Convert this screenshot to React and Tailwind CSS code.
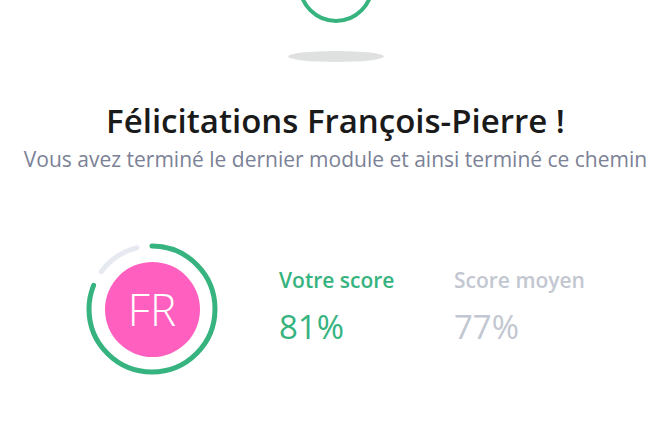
const R = 63;
const C = 2 * Math.PI * R;

function ScoreRing({ score }) {
  const green = (score / 100) * C;
  const gap = 0.04 * C;
  const gray = C - green - gap * 2;
  return (
    <div className="relative w-[136px] h-[136px] flex items-center justify-center">
      <svg className="absolute inset-0" width="136" height="136" viewBox="0 0 136 136">
        <g transform="rotate(-90 68 68)">
          <circle
            cx="68"
            cy="68"
            r={R}
            fill="none"
            stroke="#e6e9f0"
            strokeWidth="5"
            strokeLinecap="round"
            strokeDasharray={`${gray} ${C}`}
            strokeDashoffset={-(green + gap)}
          />
          <circle
            cx="68"
            cy="68"
            r={R}
            fill="none"
            stroke="#36b37e"
            strokeWidth="5"
            strokeLinecap="round"
            strokeDasharray={`${green} ${C}`}
          />
        </g>
      </svg>
      <div className="w-[95px] h-[95px] rounded-full bg-[#ff5fbf] flex items-center justify-center text-white text-[44px] leading-none font-light">
        FR
      </div>
    </div>
  );
}

export default function App() {
  return (
    <div
      className="w-[671px] h-[444px] bg-white overflow-hidden flex flex-col items-center"
      style={{ fontFamily: '"Open Sans", sans-serif' }}
    >
      <div className="mt-[-53px] w-[76px] h-[76px] rounded-full border-4 border-[#36b37e]" />
      <div className="mt-[28px] w-[96px] h-[11px] rounded-[50%] bg-[#dfe1e1]" />

      <h1 className="mt-[39px] text-[33px] leading-[40px] font-semibold text-[#1a1a1a]">
        Félicitations François-Pierre !
      </h1>
      <p className="mt-[4px] text-[21px] leading-[28px] text-[#7b8196]">
        Vous avez terminé le dernier module et ainsi terminé ce chemin
      </p>

      <div className="mt-[68px] w-full flex items-start pl-[84px]">
        <ScoreRing score={81} />
        <div className="mt-[25px] ml-[59px] flex flex-col w-[175px]">
          <span className="text-[21px] leading-[28px] font-semibold text-[#36b37e]">Votre score</span>
          <span className="mt-[13px] text-[33px] leading-[40px] text-[#36b37e]">81%</span>
        </div>
        <div className="mt-[25px] flex flex-col">
          <span className="text-[21px] leading-[28px] font-semibold text-[#c3c7d1]">Score moyen</span>
          <span className="mt-[13px] text-[33px] leading-[40px] text-[#c3c7d1]">77%</span>
        </div>
      </div>
    </div>
  );
}
